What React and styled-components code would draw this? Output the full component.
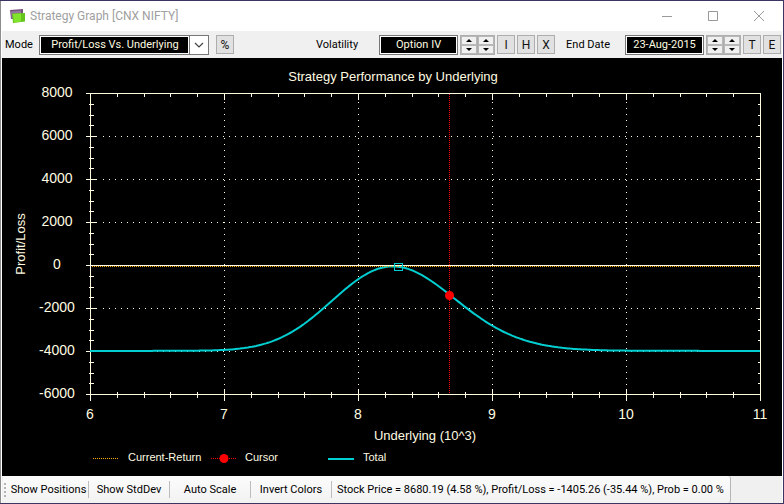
import React, { useState } from "react";
import styled, { createGlobalStyle } from "styled-components";

const CREAM = "#fffbe0";
const CYAN = "#00ced1";
const UI_FONT = 'Roboto, "Liberation Sans", Arial, sans-serif';
const CHART_FONT = '"Liberation Sans", Arial, sans-serif';

const GlobalStyle = createGlobalStyle`
  * { box-sizing: border-box; }
  body { margin: 0; background: #3b3562; }
`;

const Window = styled.main`
  min-height: 100vh;
  display: flex;
  flex-direction: column;
  padding: 1px 0;
  background: #3b3562;
  font-family: ${UI_FONT};
  font-size: 11px;
  color: #000;
`;

const Frame = styled.div`
  display: flex;
  flex-direction: column;
  flex: 1;
  margin: 0 1px;
  border: solid #fff;
  border-width: 0 1px;
  background: #f0f0f0;
  box-shadow: -1px 0 #8c8c8c;
`;

const TitleBar = styled.header`
  display: flex;
  align-items: center;
  height: 30px;
  padding-left: 8px;
  background: #fff;
`;

const Title = styled.h1`
  flex: 1;
  margin: 0 0 0 5px;
  font: 400 12px/16px Roboto, "Segoe UI", sans-serif;
  color: #a0a0a0;
`;

const CaptionButton = styled.button`
  display: grid;
  place-items: center;
  width: 46px;
  height: 29px;
  padding: 0;
  border: 0;
  background: none;
  color: #999;
`;

const Toolbar = styled.div`
  display: flex;
  align-items: center;
  height: 27px;
  padding: 0 1px 0 3px;
`;

const Group = styled.div`
  display: flex;
  align-items: center;
  gap: 2px;
  margin-left: ${(p) => p.$before || 0}px;
`;

const Spacer = styled.div`
  flex: 1;
`;

const Label = styled.label`
  margin-right: ${(p) => p.$gap}px;
  line-height: 16px;
  white-space: nowrap;
`;

const Combo = styled.div`
  display: grid;
  grid-template-columns: 1fr 19px;
  align-items: center;
  width: 170px;
  height: 20px;
  border: 1px solid #777;
  background: #fff;
`;

const ComboSelect = styled.select`
  grid-area: 1 / 1 / 2 / 3;
  appearance: none;
  width: 100%;
  height: 18px;
  padding: 0 18px 0 0;
  border: 1px solid #fff;
  border-radius: 0;
  outline: 0;
  background: linear-gradient(#000, #000) left / calc(100% - 19px) 100% no-repeat #fff;
  color: ${CREAM};
  font: 11px ${UI_FONT};
  text-align: center;
  text-align-last: center;
`;

const ComboArrow = styled.svg`
  grid-area: 1 / 2;
  width: 19px;
  height: 18px;
  border-left: 1px solid #777;
  pointer-events: none;
`;

const Field = styled.input`
  width: 79px;
  height: 20px;
  padding: 0;
  border: 1px solid #777;
  border-radius: 0;
  outline: 0;
  box-shadow: inset 0 0 0 1px #fff;
  background: #000;
  color: ${CREAM};
  font: 11px ${UI_FONT};
  text-align: center;
`;

const FlatButton = styled.button`
  display: grid;
  place-items: center;
  width: 18px;
  height: 19px;
  padding: 0;
  border: 1px solid #adadad;
  background: #e1e1e1;
  color: #111;
  font: 12px ${UI_FONT};
`;

const Steppers = styled.div`
  display: flex;
`;

const Stepper = styled.div`
  display: grid;
  width: 18px;
  height: 20px;
  border: 1px solid #adadad;

  & + & {
    margin-left: -1px;
  }
`;

const StepButton = styled.button`
  display: grid;
  place-items: center;
  padding: 0;
  border: 1px solid #b8b8b8;
  background: #f0f0f0;
`;

const ChartArea = styled.section`
  flex: 1;
  background: #000;
`;

const Chart = styled.svg`
  display: block;
  width: 100%;
  height: auto;
  font-family: ${CHART_FONT};
  fill: ${CREAM};
`;

const StatusBar = styled.footer`
  display: flex;
  height: 27px;
  padding-left: 1px;
`;

const StatusStrip = styled.div`
  display: flex;
  align-items: center;
  padding: 0 6px 0 1px;
  border-right: 1px solid #b5b5b5;
  border-radius: 0 3px 3px 0;
  background: linear-gradient(#fcfcfc, #f2f2f2);
`;

const Grip = styled.div`
  width: 2px;
  height: 14px;
  margin-right: 3px;
  background: repeating-linear-gradient(#b5b5b5 0 2px, transparent 2px 4px);
`;

const StatusButton = styled.button`
  width: ${(p) => p.$width}px;
  height: 17px;
  padding: 0;
  border: 0;
  border-right: 1px solid #bdbdbd;
  background: none;
  font: 11px ${UI_FONT};
  white-space: nowrap;
`;

const StatusText = styled.output`
  padding-left: 5px;
  white-space: nowrap;
`;

const LEFT = 88;
const TOP = 35;
const UNIT_X = 134;
const STEP_Y = 43;
const RIGHT = LEFT + 5 * UNIT_X;
const BOTTOM = TOP + 7 * STEP_Y;
const px = (v) => LEFT + (v - 6) * UNIT_X;
const py = (v) => TOP + ((8000 - v) / 2000) * STEP_Y;

const payoff = (v) => {
  const z = Math.log(v / 8.26) / 0.0553;
  return -3970 + 3930 * Math.exp((-z * z) / 2);
};

const curve = Array.from({ length: 336 }, (_, i) => {
  const v = 6 + (i * 5) / 335;
  return `${px(v).toFixed(1)},${(py(payoff(v)) + 0.5).toFixed(1)}`;
}).join(" ");

const yValues = [8000, 6000, 4000, 2000, 0, -2000, -4000, -6000];
const xValues = [6, 7, 8, 9, 10, 11];

const ticks = (() => {
  let d = "";
  for (let i = 0; i <= 28; i++) {
    const y = Math.round(TOP + (i * STEP_Y) / 4);
    const major = i % 4 === 0;
    d += major ? `M${LEFT - 5} ${y}h11M${RIGHT} ${y}h-5` : `M${LEFT - 2} ${y}h5M${RIGHT} ${y}h-3`;
  }
  for (let i = 0; i <= 25; i++) {
    const x = Math.round(LEFT + (i * UNIT_X) / 5);
    const major = i % 5 === 0;
    d += major ? `M${x} ${BOTTOM - 6}v12M${x} ${TOP}v6` : `M${x} ${BOTTOM - 3}v6M${x} ${TOP}v3`;
  }
  return d;
})();

function StrategyChart() {
  return (
    <Chart viewBox="0 0 780 418" role="img" aria-label="Strategy Performance by Underlying">
      <text x="391" y="23" fontSize="13" textAnchor="middle">Strategy Performance by Underlying</text>
      <g transform="translate(.5 .5)" fill="none" stroke={CREAM} shapeRendering="crispEdges">
        <g strokeDasharray="1 5">
          {yValues.slice(1, -1).map((v) => <path key={v} d={`M${LEFT + 12} ${py(v)}H${RIGHT - 6}`} />)}
          {xValues.slice(1, -1).map((v) => <path key={v} d={`M${px(v)} ${TOP + 8}V${BOTTOM - 6}`} />)}
        </g>
        <rect x={LEFT} y={TOP} width={RIGHT - LEFT} height={BOTTOM - TOP} />
        <path d={ticks} />
      </g>
      <path d={`M447.5 ${TOP + 1}V${BOTTOM}`} stroke="#ff0000" strokeDasharray="1 1" shapeRendering="crispEdges" />
      <polyline points={curve} fill="none" stroke={CYAN} strokeWidth="2" />
      <path d={`M${LEFT} 207.5H${RIGHT}`} stroke={CREAM} shapeRendering="crispEdges" />
      <path d={`M${LEFT + 2} 208.5H${RIGHT}`} stroke="#ffa500" strokeDasharray="1 1" shapeRendering="crispEdges" />
      <rect x="392.5" y="205.5" width="8" height="7" fill="none" stroke={CYAN} />
      <circle cx="447.5" cy="237.5" r="4.5" fill="red" />
      <g fontSize="14">
        {yValues.map((v) => (
          <text key={v} x="55" y={py(v) + 4} textAnchor="middle">{v}</text>
        ))}
        {xValues.map((v) => (
          <text key={v} x={px(v)} y="361" textAnchor="middle">{v}</text>
        ))}
      </g>
      <text x="423" y="382" fontSize="13" textAnchor="middle">Underlying (10^3)</text>
      <text transform="translate(23 186) rotate(-90)" fontSize="13" textAnchor="middle">Profit/Loss</text>
      <g fontSize="11">
        <path d="M91 400.5h26" stroke="#ffa500" strokeDasharray="1 1" shapeRendering="crispEdges" />
        <text x="126" y="403">Current-Return</text>
        <path d="M209 400.5h26" stroke="red" strokeDasharray="1 1" shapeRendering="crispEdges" />
        <circle cx="222" cy="400.5" r="4.5" fill="red" />
        <text x="243" y="403">Cursor</text>
        <path d="M326 401h26" stroke={CYAN} strokeWidth="2" />
        <text x="361" y="403">Total</text>
      </g>
    </Chart>
  );
}

function StepperPair({ name }) {
  return (
    <Steppers>
      {["coarse", "fine"].map((kind) => (
        <Stepper key={kind}>
          <StepButton aria-label={`${name} ${kind} up`}>
            <svg width="6" height="3"><path d="M0 3L3 0L6 3Z" /></svg>
          </StepButton>
          <StepButton aria-label={`${name} ${kind} down`}>
            <svg width="6" height="3"><path d="M0 0L3 3L6 0Z" /></svg>
          </StepButton>
        </Stepper>
      ))}
    </Steppers>
  );
}

export default function App() {
  const [volatility, setVolatility] = useState("Option IV");
  const [endDate, setEndDate] = useState("23-Aug-2015");
  return (
    <Window>
      <GlobalStyle />
      <Frame>
        <TitleBar>
          <svg width="15" height="15" viewBox="0 0 15 15" aria-hidden="true">
            <path d="M0 1L13 0V9L1 10Z" fill="#76507f" />
            <path d="M1 2.500L11 1.500V5H3L2.500 9H1.500Z" fill="#95789d" />
            <path d="M2 4.500L15 4V12.500L3 14Z" fill="#62c41c" />
            <path d="M3 5L11 4.500V12.500L4 13.500Z" fill="#82e32c" />
          </svg>
          <Title>Strategy Graph [CNX NIFTY]</Title>
          <CaptionButton aria-label="Minimize">
            <svg width="10" height="10"><path d="M0 5.500H10" stroke="currentColor" /></svg>
          </CaptionButton>
          <CaptionButton aria-label="Maximize">
            <svg width="10" height="10"><path d="M.5 .5H9.500V9.500H.5Z" fill="none" stroke="currentColor" /></svg>
          </CaptionButton>
          <CaptionButton aria-label="Close">
            <svg width="10" height="10"><path d="M0 0L10 10M10 0L0 10" stroke="currentColor" /></svg>
          </CaptionButton>
        </TitleBar>
        <Toolbar>
          <Group>
            <Label htmlFor="mode" $gap={4}>Mode</Label>
            <Combo>
              <ComboSelect id="mode">
                <option>Profit/Loss Vs. Underlying</option>
              </ComboSelect>
              <ComboArrow viewBox="0 0 18 18" aria-hidden="true">
                <path d="M5 7L9 11L13 7" fill="none" stroke="#444" strokeWidth="1.2" />
              </ComboArrow>
            </Combo>
          </Group>
          <Group $before={7}>
            <FlatButton aria-label="Percent">%</FlatButton>
          </Group>
          <Spacer />
          <Group>
            <Label htmlFor="volatility" $gap={19}>Volatility</Label>
            <Field id="volatility" value={volatility} onChange={(e) => setVolatility(e.target.value)} />
            <StepperPair name="Volatility" />
            <FlatButton>I</FlatButton>
            <FlatButton>H</FlatButton>
            <FlatButton>X</FlatButton>
          </Group>
          <Group $before={11}>
            <Label htmlFor="end-date" $gap={13}>End Date</Label>
            <Field id="end-date" value={endDate} onChange={(e) => setEndDate(e.target.value)} />
            <StepperPair name="End date" />
            <FlatButton>T</FlatButton>
            <FlatButton>E</FlatButton>
          </Group>
        </Toolbar>
        <ChartArea>
          <StrategyChart />
        </ChartArea>
        <StatusBar>
          <StatusStrip>
            <Grip />
            <StatusButton $width={80}>Show Positions</StatusButton>
            <StatusButton $width={81}>Show StdDev</StatusButton>
            <StatusButton $width={81}>Auto Scale</StatusButton>
            <StatusButton $width={81}>Invert Colors</StatusButton>
            <StatusText>
              Stock Price = 8680.19 (4.58 %), Profit/Loss = -1405.26 (-35.44 %), Prob = 0.00 %
            </StatusText>
          </StatusStrip>
        </StatusBar>
      </Frame>
    </Window>
  );
}
